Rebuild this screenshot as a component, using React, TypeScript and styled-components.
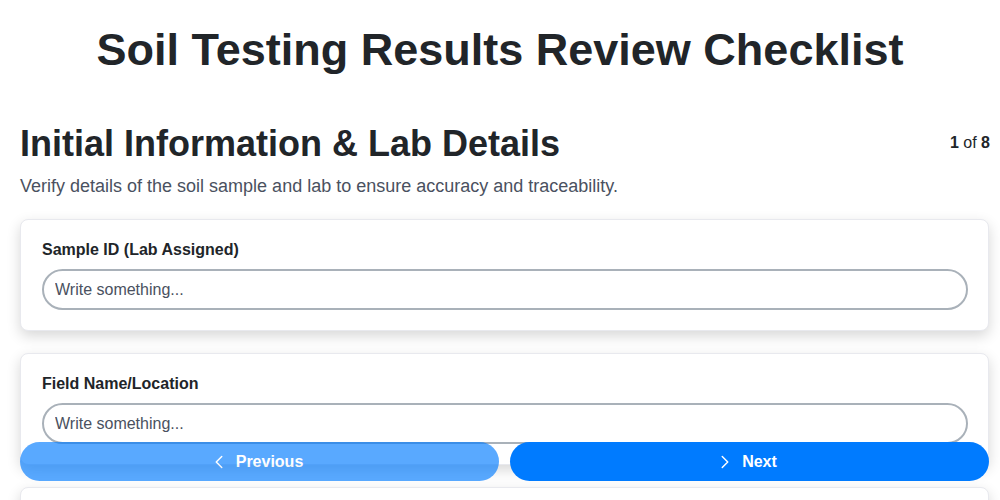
import styled, { createGlobalStyle } from 'styled-components';
import { ChevronLeft, ChevronRight } from 'lucide-react';

const fields = [
  'Sample ID (Lab Assigned)',
  'Field Name/Location',
  'Date Sample Collected',
  'Laboratory Name',
];

const App = () => {
  return (
    <>
      <GlobalStyle />
      <Page>
        <Title>Soil Testing Results Review Checklist</Title>
        <SectionHeader>
          <SectionTitle>Initial Information &amp; Lab Details</SectionTitle>
          <StepCount>
            <b>1</b> of <b>8</b>
          </StepCount>
        </SectionHeader>
        <Description>
          Verify details of the soil sample and lab to ensure accuracy and traceability.
        </Description>
        <CardList>
          {fields.map((field) => (
            <Card key={field}>
              <Label>{field}</Label>
              <Input type='text' placeholder='Write something...' />
            </Card>
          ))}
        </CardList>
      </Page>
      <NavBar>
        <NavButton $faded>
          <ChevronLeft size={22} strokeWidth={1.6} />
          Previous
        </NavButton>
        <NavButton>
          <ChevronRight size={22} strokeWidth={1.6} />
          Next
        </NavButton>
      </NavBar>
    </>
  );
};

export default App;

const GlobalStyle = createGlobalStyle`
  html {
    scrollbar-width: none;
  }
  html::-webkit-scrollbar {
    display: none;
  }
  body {
    margin: 0;
    background: #fff;
    color: #212529;
    font-family: "Liberation Sans", Arial, sans-serif;
  }
  * {
    box-sizing: border-box;
  }
`;

const Page = styled.main`
  padding: 23px 10px 80px 20px;
`;

const Title = styled.h1`
  margin: 0 -10px 45px -20px;
  font-size: 45px;
  line-height: 54px;
  font-weight: 700;
  text-align: center;
  color: #212529;
`;

const SectionHeader = styled.div`
  display: flex;
  align-items: center;
  justify-content: space-between;
`;

const SectionTitle = styled.h2`
  margin: 0;
  font-size: 36px;
  line-height: 43px;
  font-weight: 700;
  color: #212529;
`;

const StepCount = styled.span`
  font-size: 16px;
  color: #212529;
  margin-top: -2px;

  b {
    font-weight: 700;
  }
`;

const Description = styled.p`
  margin: 8px 0 19px;
  font-size: 18px;
  line-height: 27px;
  color: #4a5160;
`;

const CardList = styled.div`
  display: flex;
  flex-direction: column;
  gap: 22px;
`;

const Card = styled.section`
  display: flex;
  flex-direction: column;
  gap: 10px;
  padding: 20px 20px 20px 21px;
  margin-right: 1px;
  background: #fff;
  border: 1px solid #e8e9ee;
  border-radius: 8px;
  box-shadow: 0 5px 14px rgba(0, 0, 0, 0.16);
`;

const Label = styled.label`
  font-size: 16px;
  line-height: 19px;
  font-weight: 700;
  color: #212529;
`;

const Input = styled.input`
  height: 41px;
  width: 100%;
  padding: 0 11px;
  border: 2px solid #a9b1b9;
  border-radius: 21px;
  font-family: inherit;
  font-size: 16px;
  color: #212529;
  outline: none;

  &::placeholder {
    color: #4a5160;
  }
`;

const NavBar = styled.nav`
  position: fixed;
  left: 20px;
  right: 11px;
  bottom: 19px;
  display: grid;
  grid-template-columns: 1fr 1fr;
  gap: 11px;
`;

const NavButton = styled.button<{ $faded?: boolean }>`
  display: flex;
  align-items: center;
  justify-content: center;
  gap: 6px;
  height: 39px;
  border: none;
  border-radius: 20px;
  background: #007bff;
  color: #fff;
  font-family: inherit;
  font-size: 16px;
  font-weight: 700;
  cursor: pointer;
  opacity: ${({ $faded }) => ($faded ? 0.65 : 1)};

  svg {
    margin: 1px 0 0 -8px;
  }
`;
